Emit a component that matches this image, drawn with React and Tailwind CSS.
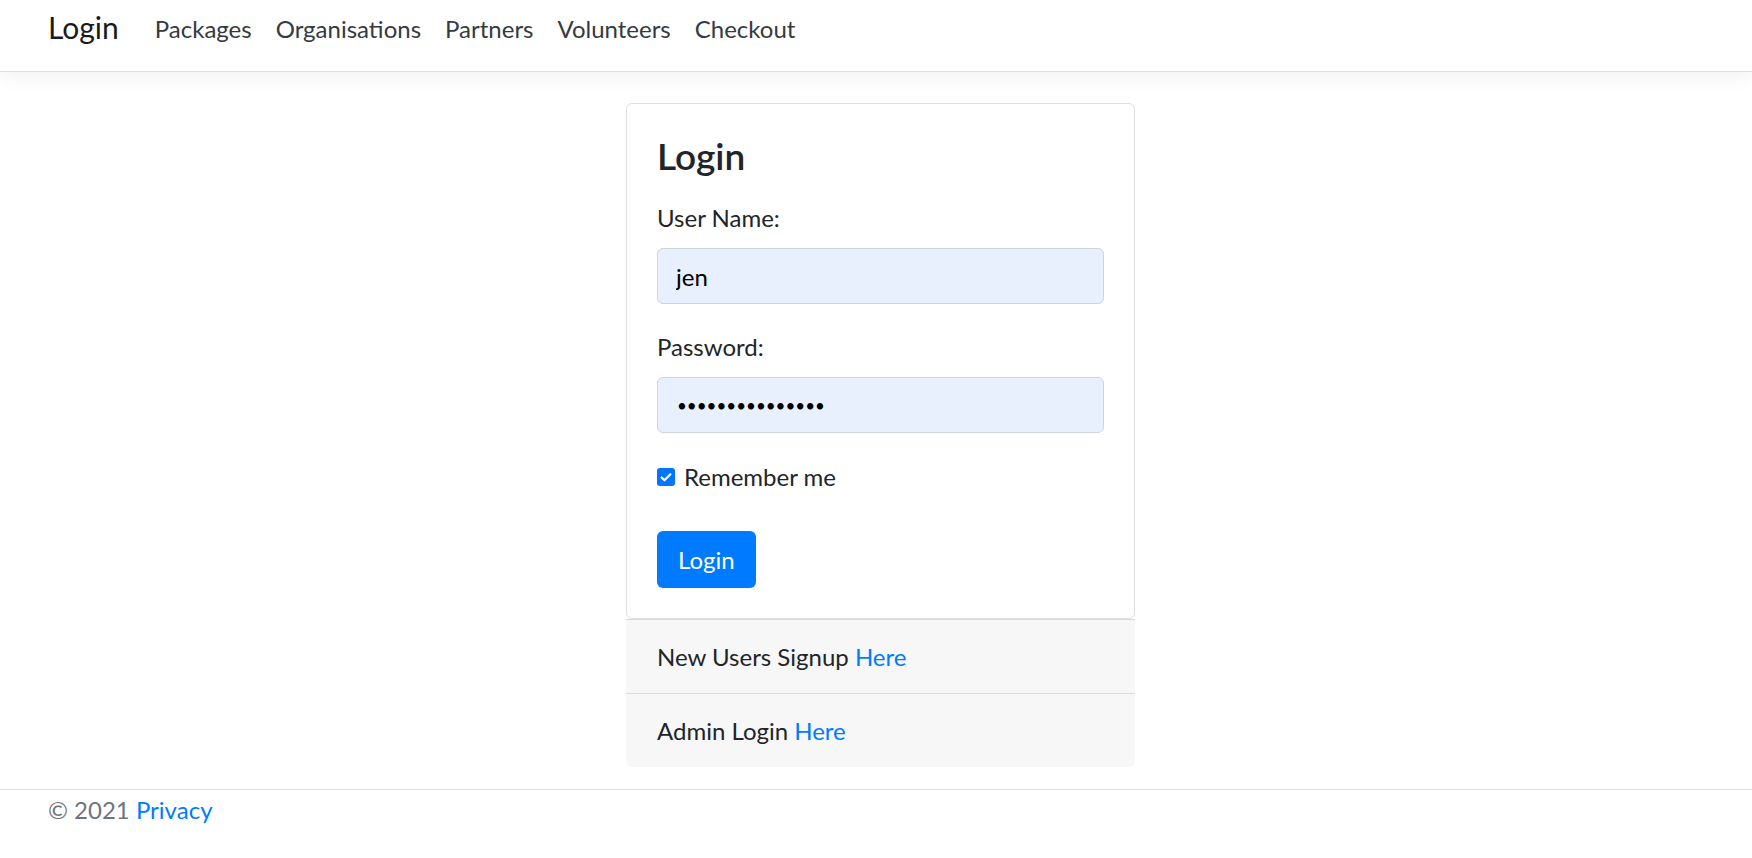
import React from "react";

const font = { fontFamily: '"Segoe UI", Lato, "Open Sans", sans-serif' };

function Navbar() {
  const links = ["Packages", "Organisations", "Partners", "Volunteers", "Checkout"];
  return (
    <nav className="h-[72px] bg-white border-b border-[#e0e0e0] shadow-[0_6px_18px_rgba(0,0,0,0.05)] pl-[48px] pt-[5px] flex items-baseline">
      <a className="text-[30px] leading-[1.5] text-[#1a1a1a] mr-[24px]">Login</a>
      {links.map((l) => (
        <a key={l} className="text-[24px] leading-[1.5] text-[#343a40] px-[12px] relative top-[-1px]">
          {l}
        </a>
      ))}
    </nav>
  );
}

function LoginCard() {
  return (
    <div className="w-[509px]">
      <div className="bg-white border border-[#dfdfdf] rounded-[6px] px-[30px] pt-[30px] pb-[30px]">
        <h4 className="text-[37px] leading-[1.17] font-semibold text-[#212529] mb-[23px]">Login</h4>
        <label className="block text-[24px] leading-[1.5] mb-[12px]">User Name:</label>
        <input
          readOnly
          value="jen"
          className="block w-full h-[56px] px-[18px] text-[24px] text-black bg-[#e8f0fe] border border-[#ced4da] rounded-[6px] outline-none mb-[25px]"
        />
        <label className="block text-[24px] leading-[1.5] mb-[12px]">Password:</label>
        <div className="flex items-center w-full h-[56px] px-[19px] text-[17px] text-black bg-[#e8f0fe] border border-[#ced4da] rounded-[6px]">
          •••••••••••••••
        </div>
        <div className="flex items-center gap-[9px] mt-[26px] h-[36px]">
          <span className="w-[18px] h-[18px] rounded-[3px] bg-[#0075ff] flex items-center justify-center">
            <svg width="14" height="14" viewBox="0 0 16 16" fill="none">
              <path d="M3 8.5l3.2 3.2L13 4.8" stroke="white" strokeWidth="2.6" strokeLinecap="round" strokeLinejoin="round" />
            </svg>
          </span>
          <span className="text-[24px] leading-[1.5]">Remember me</span>
        </div>
        <button className="mt-[36px] h-[57px] px-[21px] bg-[#007bff] text-white text-[24px] leading-[1.5] rounded-[6px]">
          Login
        </button>
      </div>
      <div className="bg-[#f7f7f7] rounded-b-[6px] text-[24px] leading-[1.5]">
        <div className="border-t border-[#d8d8d8] px-[31px] pt-[19px] pb-[18px]">
          New Users Signup <a className="text-[#007bff]">Here</a>
        </div>
        <div className="border-t border-[#dcdcdc] px-[31px] pt-[19px] pb-[18px]">
          Admin Login <a className="text-[#007bff]">Here</a>
        </div>
      </div>
    </div>
  );
}

export default function App() {
  return (
    <div style={font} className="min-h-[858px] bg-white text-[#212529]">
      <Navbar />
      <div className="flex justify-center pl-[9px] pt-[31px]">
        <LoginCard />
      </div>
      <footer className="mt-[22px] border-t border-[#dee2e6] pl-[48px] pt-[2px] text-[24px] leading-[1.5] text-[#6c757d]">
        © 2021 <a className="text-[#007bff]">Privacy</a>
      </footer>
    </div>
  );
}
